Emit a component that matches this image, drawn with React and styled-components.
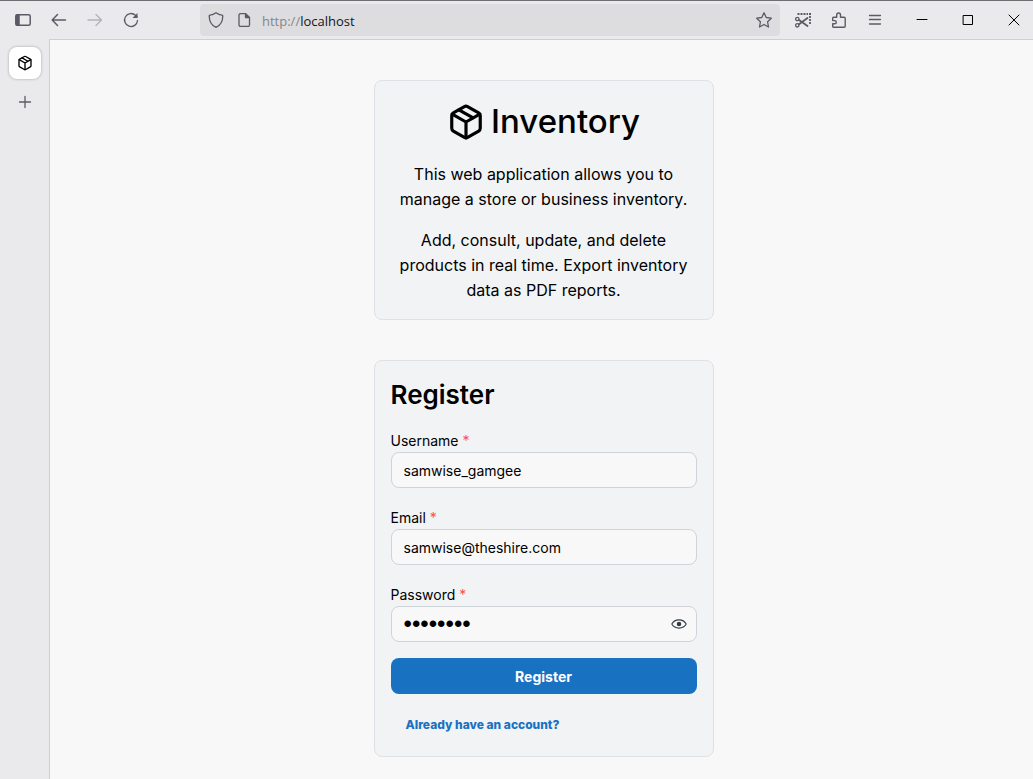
import React, { useState } from "react";
import styled, { createGlobalStyle } from "styled-components";

const GlobalStyle = createGlobalStyle`
  * { box-sizing: border-box; }
  body { margin: 0; background: #f8f8f8; color: #000; font-family: Inter, "Liberation Sans", sans-serif; }
  button, input { font: inherit; }
`;

const Browser = styled.div`
  display: flex;
  flex-direction: column;
  min-height: 100vh;
  background: #eaeaec;
`;

const Toolbar = styled.header`
  display: flex;
  align-items: center;
  height: 39px;
  border-top: 1px solid #6f6d72;
`;

const NavGroup = styled.nav`
  display: flex;
  padding-left: 5px;
  width: 200px;
`;

const ToolButton = styled.button`
  display: flex;
  align-items: center;
  justify-content: center;
  align-self: center;
  width: 36px;
  height: 32px;
  padding: 0;
  border: 0;
  background: none;
  color: #5b5b66;

  &:disabled { color: #b3b3b9; }
`;

const BookmarkButton = styled(ToolButton)`
  width: 32px;
`;

const RevealButton = styled(ToolButton)`
  width: 34px;
  height: 34px;
  color: #343a40;
`;

const AddressBar = styled.div`
  display: flex;
  flex: 1;
  align-items: center;
  min-width: 0;
  height: 32px;
  padding-left: 8px;
  gap: 10px;
  border-radius: 4px;
  background: #dddddf;
  color: #5b5b66;
`;

const SiteIcons = styled.div`
  display: flex;
  gap: 12px;
`;

const AddressText = styled.a`
  flex: 1;
  padding-top: 2px;
  color: #15141a;
  font: 13px/20px "Open Sans", "Noto Sans", sans-serif;
  text-decoration: none;
`;

const Scheme = styled.span`
  color: #85858a;
`;

const ToolGroup = styled.div`
  display: flex;
  padding: 0 6px 0 5px;
`;

const WindowButton = styled(ToolButton)`
  width: 46px;
  color: #000;
`;

const WindowControls = styled.div`
  display: flex;
  margin-right: -4px;
`;

const Body = styled.div`
  display: flex;
  flex: 1;
`;

const TabStrip = styled.aside`
  display: flex;
  flex-direction: column;
  align-items: center;
  width: 49px;
  padding-top: 8px;
  gap: 7px;
`;

const Tab = styled.button`
  display: flex;
  align-items: center;
  justify-content: center;
  width: 32px;
  height: 32px;
  padding: 0;
  border: 0;
  border-radius: 8px;
  background: #fff;
  box-shadow: 0 0 3px rgba(0, 0, 0, 0.3);
`;

const Page = styled.main`
  display: flex;
  flex: 1;
  flex-direction: column;
  align-items: center;
  gap: 40px;
  padding: 40px 16px 22px 20px;
  border-top: 1px solid #cfcfd1;
  border-left: 1px solid #cfcfd1;
  background: #f8f8f8;
`;

const Card = styled.section`
  width: 100%;
  max-width: 340px;
  padding: 16px;
  border: 1px solid #dee2e6;
  border-radius: 8px;
  background: #f1f3f5;
`;

const IntroCard = styled(Card)`
  display: flex;
  flex-direction: column;
  gap: 16px;
  text-align: center;
`;

const Brand = styled.h1`
  display: flex;
  align-items: center;
  justify-content: center;
  gap: 6px;
  margin: 0;
  font-size: 33px;
  font-weight: 500;
  line-height: 49px;
`;

const Paragraph = styled.p`
  margin: 0;
  font-size: 16px;
  line-height: 25px;
`;

const FormTitle = styled.h2`
  margin: 0 0 18px;
  font-size: 26px;
  font-weight: 600;
  line-height: 35px;
`;

const Form = styled.form`
  display: flex;
  flex-direction: column;
  gap: 16px;
`;

const Fields = styled.div`
  display: flex;
  flex-direction: column;
  gap: 19px;
`;

const Field = styled.div`
  display: flex;
  flex-direction: column;
`;

const Label = styled.label`
  font-size: 14px;
  line-height: 22px;
`;

const Required = styled.span`
  color: #fa5252;
`;

const Control = styled.div`
  display: flex;
  height: 36px;
  border: 1px solid #ced4da;
  border-radius: 8px;
  background: #f8f8f8;
`;

const Input = styled.input`
  flex: 1;
  min-width: 0;
  padding: 0 12px;
  border: 0;
  outline: 0;
  background: none;
  color: #000;
  font-size: 14px;

  &[type="password"] {
    font-family: "Liberation Sans", sans-serif;
    font-size: 24px;
  }
`;

const SubmitButton = styled.button`
  height: 36px;
  border: 0;
  border-radius: 8px;
  background: #1971c2;
  color: #fff;
  font-size: 14px;
  font-weight: 700;
`;

const AccountLink = styled.a`
  align-self: flex-start;
  padding: 0 15px;
  color: #1971c2;
  font-size: 12px;
  font-weight: 800;
  line-height: 30px;
  text-decoration: none;
`;

function Icon({ size = 16, box = 16, stroke = 1.3, children }) {
  return (
    <svg
      width={size}
      height={size}
      viewBox={`0 0 ${box} ${box}`}
      fill="none"
      stroke="currentColor"
      strokeWidth={stroke}
      strokeLinecap="round"
      strokeLinejoin="round"
      aria-hidden="true"
    >
      {children}
    </svg>
  );
}

function PackageIcon({ size }) {
  return (
    <Icon size={size} box={24} stroke={2}>
      <path d="M21 16V8a2 2 0 0 0-1-1.73l-7-4a2 2 0 0 0-2 0l-7 4A2 2 0 0 0 3 8v8a2 2 0 0 0 1 1.73l7 4a2 2 0 0 0 2 0l7-4A2 2 0 0 0 21 16z" />
      <path d="M3.3 7 12 12l8.700-5M12 12v10M7.500 4.300l9 5.100" />
    </Icon>
  );
}

function TextField({ id, label, type = "text", value, children }) {
  return (
    <Field>
      <Label htmlFor={id}>
        {label} <Required>*</Required>
      </Label>
      <Control>
        <Input id={id} type={type} defaultValue={value} required />
        {children}
      </Control>
    </Field>
  );
}

export default function App() {
  const [visible, setVisible] = useState(false);
  return (
    <>
      <GlobalStyle />
      <Browser>
        <Toolbar>
          <NavGroup>
            <ToolButton aria-label="Toggle sidebar">
              <Icon stroke={1.5}>
                <rect x="0.8" y="2.700" width="14.400" height="10.600" rx="1.500" />
                <path d="M1.500 3h2.500v10h-2.500z" fill="currentColor" />
              </Icon>
            </ToolButton>
            <ToolButton aria-label="Back">
              <Icon stroke={1.5}><path d="M14.500 8H1.500M6.500 2.500 1.200 8l5.300 5.500" /></Icon>
            </ToolButton>
            <ToolButton aria-label="Forward" disabled>
              <Icon><path d="M1 8h13.500M9 2.500 14.500 8 9 13.500" /></Icon>
            </ToolButton>
            <ToolButton aria-label="Reload">
              <Icon>
                <path d="M14.500 8.500A6.500 6.500 0 1 1 12.500 3.300L14 4.800" />
                <path d="M14.500 1v5h-5z" fill="currentColor" stroke="none" />
              </Icon>
            </ToolButton>
          </NavGroup>
          <AddressBar>
            <SiteIcons>
              <Icon><path d="M8 .7c2 1.500 4.400 2.200 6.700 2.600.3 5.100-1.300 9.400-6.700 12C2.600 12.700 1 8.400 1.300 3.300 3.600 2.900 6 2.200 8 .7z" /></Icon>
              <Icon>
                <path d="M9.500 1.600h-5a1.500 1.500 0 0 0-1.500 1.500v9.800a1.500 1.500 0 0 0 1.500 1.500h7.500a1.500 1.500 0 0 0 1.500-1.500V5.500z" />
                <path d="M9.500 1.600v4h4z" fill="currentColor" />
              </Icon>
            </SiteIcons>
            <AddressText href="http://localhost"><Scheme>http://</Scheme>localhost</AddressText>
            <BookmarkButton aria-label="Bookmark">
              <Icon><path d="m8 .8 2.200 4.700 5.100.7-3.700 3.600.9 5.200L8 12.500 3.500 15l.9-5.200L.7 6.200l5.100-.7z" /></Icon>
            </BookmarkButton>
          </AddressBar>
          <ToolGroup>
            <ToolButton aria-label="Take screenshot">
              <Icon>
                <path d="M2.500 2h2M5.500 2h2M8.500 2h2M11.500 2h1.500M14 2h2M15 4v2M15 7v2M15 10v2" strokeWidth="1.800" strokeLinecap="butt" />
                <circle cx="2.300" cy="7" r="1.700" />
                <circle cx="2.300" cy="13.300" r="1.700" />
                <path d="m4 8 8.500 6M4 12.300l8.500-6.300" strokeWidth="1.800" />
              </Icon>
            </ToolButton>
            <ToolButton aria-label="Extensions">
              <Icon stroke={1.4}>
                <path d="M2.500 5.200h3.200V2.900a1.900 1.900 0 0 1 3.800 0v2.300h3.700a1 1 0 0 1 1 1v8a1 1 0 0 1-1 1H2.700a1 1 0 0 1-1-1v-2.400h2a1.600 1.600 0 0 0 0-3.200h-2V6a.8.8 0 0 1 .8-.8z" />
              </Icon>
            </ToolButton>
            <ToolButton aria-label="Menu">
              <Icon><path d="M2.500 3.500h11M2.500 7.500h11M2.500 12h11" /></Icon>
            </ToolButton>
          </ToolGroup>
          <WindowControls>
            <WindowButton aria-label="Minimize"><Icon stroke={1}><path d="M3 7.500h10" /></Icon></WindowButton>
            <WindowButton aria-label="Maximize"><Icon stroke={1}><rect x="3.500" y="3.500" width="9" height="9" /></Icon></WindowButton>
            <WindowButton aria-label="Close"><Icon stroke={1}><path d="m3 3 10 10M13 3 3 13" /></Icon></WindowButton>
          </WindowControls>
        </Toolbar>
        <Body>
          <TabStrip>
            <Tab aria-label="Inventory"><PackageIcon size={16} /></Tab>
            <ToolButton aria-label="New tab"><Icon><path d="M8 2.500v11M2.500 8h11" /></Icon></ToolButton>
          </TabStrip>
          <Page>
            <IntroCard>
              <Brand><PackageIcon size={38} />Inventory</Brand>
              <Paragraph>This web application allows you to manage a store or business inventory.</Paragraph>
              <Paragraph>Add, consult, update, and delete products in real time. Export inventory data as PDF reports.</Paragraph>
            </IntroCard>
            <Card>
              <FormTitle>Register</FormTitle>
              <Form onSubmit={(e) => e.preventDefault()}>
                <Fields>
                  <TextField id="username" label="Username" value="samwise_gamgee" />
                  <TextField id="email" label="Email" type="email" value="samwise@theshire.com" />
                  <TextField id="password" label="Password" type={visible ? "text" : "password"} value="potatoes">
                    <RevealButton type="button" aria-label="Show password" onClick={() => setVisible(!visible)}>
                      <Icon stroke={1.1}>
                        <path d="M.8 8C2.500 5 5 3.900 8 3.900S13.500 5 15.200 8C13.500 11 11 12.100 8 12.100S2.500 11 .8 8z" />
                        <circle cx="8" cy="8" r="1.700" fill="currentColor" />
                      </Icon>
                    </RevealButton>
                  </TextField>
                </Fields>
                <SubmitButton type="submit">Register</SubmitButton>
                <AccountLink href="#login">Already have an account?</AccountLink>
              </Form>
            </Card>
          </Page>
        </Body>
      </Browser>
    </>
  );
}
